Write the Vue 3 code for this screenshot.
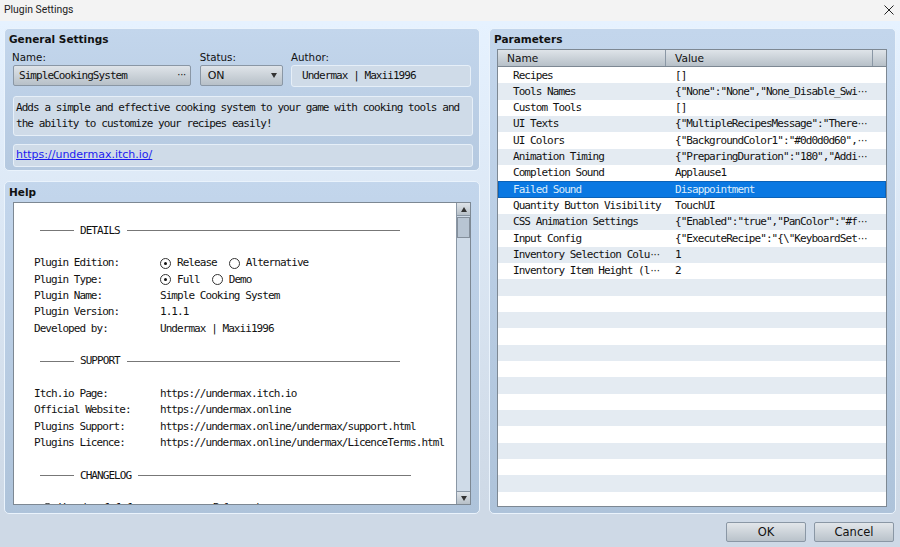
<script setup>
const rows = [
  ['Recipes', '[]'],
  ['Tools Names', '{"None":"None","None_Disable_Swi', true],
  ['Custom Tools', '[]'],
  ['UI Texts', '{"MultipleRecipesMessage":"There', true],
  ['UI Colors', '{"BackgroundColor1":"#0d0d0d60",', true],
  ['Animation Timing', '{"PreparingDuration":"180","Addi', true],
  ['Completion Sound', 'Applause1'],
  ['Failed Sound', 'Disappointment'],
  ['Quantity Button Visibility', 'TouchUI'],
  ['CSS Animation Settings', '{"Enabled":"true","PanColor":"#f', true],
  ['Input Config', '{"ExecuteRecipe":"{\\"KeyboardSet', true],
  ['Inventory Selection Colu', '1', false, true],
  ['Inventory Item Height (l', '2', false, true],
]
const emptyRows = 14
const details = [
  ['Plugin Name:', 'Simple Cooking System'],
  ['Plugin Version:', '1.1.1'],
  ['Developed by:', 'Undermax | Maxii1996'],
]
const support = [
  ['Itch.io Page:', 'https://undermax.itch.io'],
  ['Official Website:', 'https://undermax.online'],
  ['Plugins Support:', 'https://undermax.online/undermax/support.html'],
  ['Plugins Licence:', 'https://undermax.online/undermax/LicenceTerms.html'],
]
</script>

<template>
  <div class="window">
    <header class="titlebar">
      <span>Plugin Settings</span>
      <svg class="close" width="10" height="10" viewBox="0 0 10 10"><path d="M.5.5l9 9M9.500.5l-9 9" stroke="#222" fill="none"/></svg>
    </header>
    <main class="body">
      <div class="columns">
        <div class="left">
          <section class="panel general">
            <h2>General Settings</h2>
            <div class="fields">
              <div class="f-name"><label>Name:</label>
                <div class="btn mono between"><span>SimpleCookingSystem</span><span class="dots">···</span></div>
              </div>
              <div class="f-status"><label>Status:</label>
                <div class="btn between status"><span>ON</span><span class="caret"></span></div>
              </div>
              <div class="f-author"><label>Author:</label>
                <div class="inset mono author">Undermax | Maxii1996</div>
              </div>
            </div>
            <div class="inset mono desc">Adds a simple and effective cooking system to your game with cooking tools and<br>the ability to customize your recipes easily!</div>
            <div class="inset linkbox"><a>https://undermax.itch.io/</a></div>
          </section>
          <section class="panel help">
            <h2>Help</h2>
            <div class="helpbox">
              <div class="helptext mono">
                <div class="sep"><i class="r1"></i><span>DETAILS</span><i class="r2"></i></div>
                <div class="ln"></div>
                <div class="ln"><span class="k">Plugin Edition:</span><b class="radio on"></b>Release<b class="radio second"></b>Alternative</div>
                <div class="ln"><span class="k">Plugin Type:</span><b class="radio on"></b>Full<b class="radio second"></b>Demo</div>
                <div class="ln" v-for="d in details" :key="d[0]"><span class="k">{{ d[0] }}</span>{{ d[1] }}</div>
                <div class="ln"></div>
                <div class="sep"><i class="r1"></i><span>SUPPORT</span><i class="r2"></i></div>
                <div class="ln"></div>
                <div class="ln" v-for="d in support" :key="d[0]"><span class="k">{{ d[0] }}</span>{{ d[1] }}</div>
                <div class="ln"></div>
                <div class="sep"><i class="r1"></i><span>CHANGELOG</span><i class="r2"></i></div>
                <div class="ln"></div>
                <div class="ln cut"><b class="radio"></b>Version 1.1.1 <span class="far">Released</span></div>
              </div>
              <div class="scrollbar">
                <div class="sb-btn"><span class="tri up"></span></div>
                <div class="thumb"></div>
                <div class="track"></div>
                <div class="sb-btn"><span class="tri down"></span></div>
              </div>
            </div>
          </section>
        </div>
        <section class="panel params">
          <h2>Parameters</h2>
          <div class="table">
            <div class="thead"><span class="th1">Name</span><span class="th2">Value</span><span class="th3"></span></div>
            <div class="tbody mono">
              <div v-for="(r, i) in rows" :key="r[0]" class="row" :class="{ sel: i === 7 }">
                <span class="c1">{{ r[0] }}<span v-if="r[3]" class="more">···</span></span>
                <span class="c2">{{ r[1] }}<span v-if="r[2]" class="more">···</span></span>
              </div>
              <div v-for="n in emptyRows" :key="n" class="row"></div>
            </div>
          </div>
        </section>
      </div>
      <footer class="footer">
        <button class="fbtn">OK</button>
        <button class="fbtn">Cancel</button>
      </footer>
    </main>
  </div>
</template>

<style>
html, body { margin: 0; padding: 0; }
</style>

<style scoped>
.window { width: 900px; height: 547px; overflow: hidden; display: flex; flex-direction: column; font-family: "DejaVu Sans", sans-serif; color: #111; }
.titlebar { height: 21px; flex: none; background: #f3f3f3; display: flex; align-items: center; justify-content: space-between; padding: 0 6px 2px 4px; box-sizing: border-box; font: 10.4px Roboto, sans-serif; color: #222; }
.close { margin-top: 0; }
.body { flex: 1; min-height: 0; background: linear-gradient(#e6f2ff, #ced9e6 92%); padding: 7px 4px 6px 4px; display: flex; flex-direction: column; box-sizing: border-box; }
.columns { height: 486px; flex: none; display: flex; gap: 9px; }
.left { width: 476px; flex: none; display: flex; flex-direction: column; gap: 10px; }
.panel { box-sizing: border-box; border: 1px solid #eaf3fc; border-radius: 5px; background: linear-gradient(#c3d6ec, #aec3da); padding: 0 8px; }
h2 { margin: 0 0 0 -4px; font: bold 10.5px/20px "DejaVu Sans", sans-serif; height: 20px; }
.mono { font-family: "DejaVu Sans Mono", monospace; font-size: 11px; letter-spacing: -0.94px; }
.general { height: 143px; flex: none; background: linear-gradient(#c3d6ec, #b5c9e0); }
.fields { display: flex; }
label { display: block; font-size: 10.3px; line-height: 16px; height: 16px; }
.f-name { width: 188px; }
.f-name label { margin-left: -1px; }
.f-status { width: 92px; }
.f-author { width: 180px; }
.btn { height: 21px; box-sizing: border-box; border: 1px solid #8a97a5; border-radius: 2px; background: linear-gradient(#dfe4e9, #b7c0c8); display: flex; align-items: center; }
.between { justify-content: space-between; }
.f-name .btn { width: 178px; padding: 0 4px 0 5px; }
.dots { font-family: "DejaVu Sans", sans-serif; font-size: 10px; letter-spacing: -0.3px; margin-bottom: 2px; }
.status { width: 83px; padding: 0 5px 0 7px; font-size: 11px; }
.caret { width: 0; height: 0; border-left: 3px solid transparent; border-right: 3px solid transparent; border-top: 5px solid #333; }
.inset { box-sizing: border-box; border: 1px solid #e6eff8; border-radius: 3px; background: #cfdbe8; }
.author { height: 22px; width: 180px; line-height: 20px; padding-left: 10px; }
.desc { height: 40px; margin-top: 9px; padding: 3px 2px; line-height: 15.5px; width: 460px; }
.linkbox { height: 23px; margin-top: 8px; padding: 0 2px; line-height: 20px; width: 460px; font-size: 11px; }
.linkbox a { color: #1c1cf0; text-decoration: underline; }
.help { flex: 1; min-height: 0; display: flex; flex-direction: column; padding-bottom: 8px; }
.helpbox { flex: 1; min-height: 0; display: flex; background: #fff; border: 1px solid #7d8893; }
.helptext { flex: 1; min-width: 0; overflow: hidden; padding: 19.7px 0 0 20px; line-height: 16.33px; white-space: nowrap; }
.ln { height: 16.33px; display: flex; align-items: center; }
.k { width: 126px; flex: none; }
.sep { height: 16.33px; display: flex; align-items: center; padding-left: 6px; }
.sep span { margin: 0 7px 0 6px; }
.sep i { display: block; height: 1px; background: #777; }
.r1 { width: 34px; }
.r2 { width: 273px; }
.radio { display: inline-block; width: 11px; height: 11px; box-sizing: border-box; border: 1px solid #333; border-radius: 50%; margin-right: 6px; flex: none; position: relative; }
.radio.on::after { content: ""; position: absolute; left: 3px; top: 3px; width: 3px; height: 3px; border-radius: 50%; background: #111; }
.radio.second { margin-left: 12px; }
.cut { margin-left: 8px; }
.far { margin-left: 80px; }
.scrollbar { width: 13px; flex: none; display: flex; flex-direction: column; border-left: 1px solid #8a97a5; background: #cfdbe8; }
.sb-btn { height: 13px; flex: none; display: flex; align-items: center; justify-content: center; background: linear-gradient(#dfe4e9, #b7c0c8); border-bottom: 1px solid #8a97a5; box-sizing: border-box; }
.sb-btn:last-child { border-bottom: 0; border-top: 1px solid #8a97a5; }
.thumb { height: 21px; flex: none; margin-top: 1px; box-sizing: border-box; border: 1px solid #848f9b; background: #b8c5d3; }
.track { flex: 1; }
.tri { width: 0; height: 0; border-left: 3.5px solid transparent; border-right: 3.5px solid transparent; }
.tri.up { border-bottom: 5px solid #333; }
.tri.down { border-top: 5px solid #333; }
.params { flex: 1; min-width: 0; display: flex; flex-direction: column; padding: 0 8px 6px 7px; }
.params h2 { margin-left: -3px; }
.table { flex: 1; min-height: 0; border: 1px solid #7d8893; background: #fff; display: flex; flex-direction: column; overflow: hidden; }
.thead { height: 16px; flex: none; display: flex; background: linear-gradient(#dfe4e9, #b7c0c8); border-bottom: 1px solid #7d8893; font-size: 10.6px; line-height: 16px; }
.th1 { width: 168px; box-sizing: border-box; padding-left: 9px; border-right: 1px solid #8a97a5; }
.th2 { flex: 1; padding-left: 9px; }
.th3 { width: 13px; border-left: 1px solid #8a97a5; }
.tbody { flex: 1; min-height: 0; overflow: hidden; }
.row { height: 16.33px; display: flex; align-items: center; white-space: nowrap; line-height: 16.33px; box-sizing: border-box; padding-top: 1px; }
.row:nth-child(even) { background: #e4ebf2; }
.row.sel { background: #0a78e2; color: #dcecfb; box-shadow: inset 0 0 0 1px #0b62b8; }
.c1 { width: 177px; flex: none; padding-left: 15px; box-sizing: border-box; }
.c2 { flex: 1; }
.more { font-family: "DejaVu Sans", sans-serif; font-size: 10px; letter-spacing: 0; margin-left: 1px; }
.footer { flex: 1; display: flex; justify-content: flex-end; align-items: flex-start; gap: 8px; padding: 8px 2px 0 0; }
.fbtn { width: 80px; height: 20px; box-sizing: border-box; padding: 0; border: 1px solid #8a97a5; border-radius: 2px; background: linear-gradient(#e2e6ea, #b9c2ca); font: 11.5px "DejaVu Sans", sans-serif; color: #111; }
</style>
